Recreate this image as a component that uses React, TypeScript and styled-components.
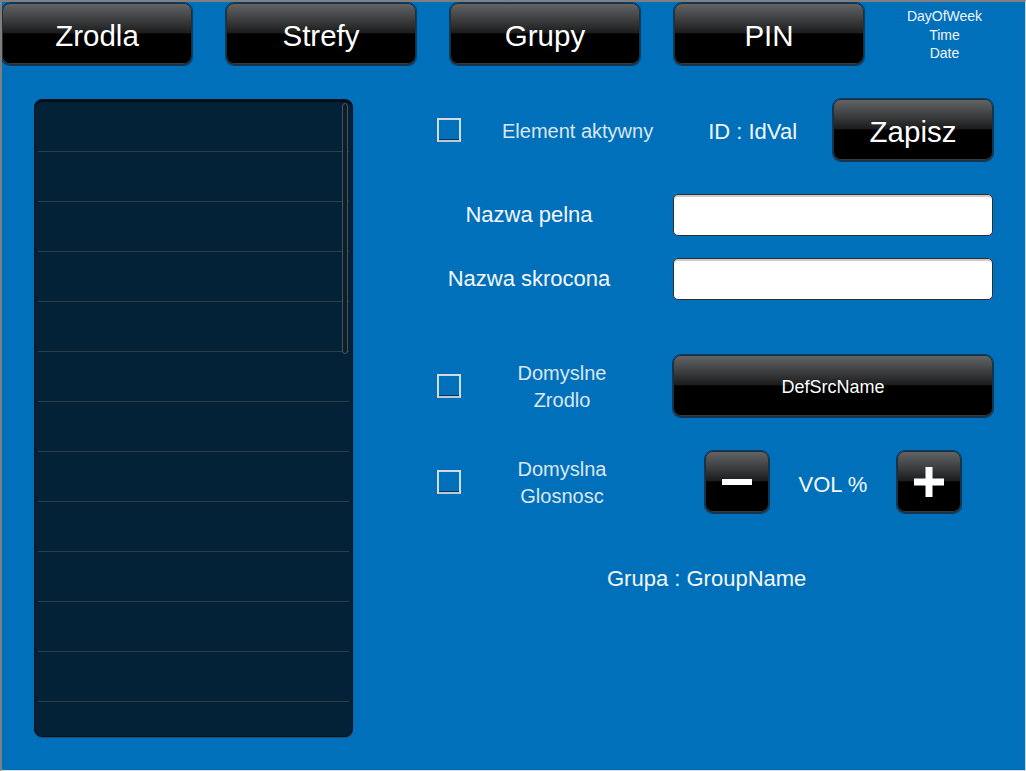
import React from "react";
import styled, { createGlobalStyle } from "styled-components";

const Global = createGlobalStyle`
  html, body { margin: 0; padding: 0; background: #0070bb; }
  body { font-family: "Liberation Sans", Arial, sans-serif; }
  * { box-sizing: border-box; }
`;

const Page = styled.div`
  width: 1026px;
  height: 771px;
  background: #0070bb;
  border-top: 2px solid #7d7f82;
  border-left: 2px solid #7d7f82;
  border-right: 1px solid #c9d6e0;
  border-bottom: 1px solid #d9dde0;
  display: flex;
  flex-direction: column;
  font-family: "Liberation Sans", Arial, sans-serif;
  color: #f4f7fa;
  overflow: hidden;
`;

const Header = styled.div`
  display: flex;
  align-items: flex-start;
  padding-top: 1px;
`;

const NavGroup = styled.div`
  display: flex;
  gap: 34px;
`;

const GlossButton = styled.button<{ $w: number; $h: number; $fs: number; $pt?: number }>`
  width: ${(p) => p.$w}px;
  height: ${(p) => p.$h}px;
  flex: none;
  padding: ${(p) => p.$pt ?? 0}px 0 0 0;
  margin: 0;
  border: 1px solid #2a2d30;
  border-radius: 8px;
  background: linear-gradient(
    to bottom,
    #626364 0%,
    #3a3b3c 28%,
    #1c1c1d 48%,
    #000 50%,
    #000 100%
  );
  box-shadow: 0 0 0 1px rgba(0, 20, 40, 0.55), inset 0 -1px 0 #3a3a3a;
  color: #ffffff;
  font-family: "Liberation Sans", Arial, sans-serif;
  font-size: ${(p) => p.$fs}px;
  line-height: 1;
  display: flex;
  align-items: center;
  justify-content: center;
  cursor: pointer;
`;

const Clock = styled.div`
  flex: 1;
  padding-top: 4px;
  text-align: center;
  font-size: 14px;
  line-height: 18.5px;
  color: #f2f6fa;
`;

const Main = styled.div`
  display: flex;
  align-items: flex-start;
  margin-top: 34px;
  padding-left: 32px;
`;

const ListPanel = styled.div`
  position: relative;
  width: 319px;
  height: 638px;
  flex: none;
  background: #032238;
  border: 1px solid #06121c;
  border-radius: 8px;
  box-shadow: inset 0 2px 1px #010c14, 0 1px 0 #1c4f77;
  padding: 2px 3px 0 3px;
  overflow: hidden;
`;

const ListRow = styled.div`
  height: 50px;
  border-bottom: 1px solid #2f3d48;
`;

const ScrollBar = styled.div`
  position: absolute;
  top: 3px;
  left: 307px;
  width: 6px;
  height: 251px;
  border: 1px solid #4c5256;
  border-radius: 3px;
  background: #0a1f2d;
`;

const Form = styled.div`
  margin-left: 84px;
  width: 556px;
  display: flex;
  flex-direction: column;
`;

const Row = styled.div<{ $mt: number; $h: number }>`
  display: flex;
  align-items: center;
  margin-top: ${(p) => p.$mt}px;
  height: ${(p) => p.$h}px;
`;

const Check = styled.div`
  width: 24px;
  height: 24px;
  flex: none;
  border: 2px solid #d4dbe0;
  border-bottom-color: #c0c8ce;
  box-shadow: inset 0 -1px 0 #0b3350;
`;

const SmallLabel = styled.div<{ $ml?: number; $w?: number }>`
  margin-left: ${(p) => p.$ml ?? 0}px;
  ${(p) => (p.$w ? `width: ${p.$w}px; text-align: center;` : "")}
  padding-top: 2px;
  font-size: 20px;
  line-height: 27px;
  color: #dbe6ef;
  white-space: nowrap;
`;

const Label = styled.div<{ $w?: number; $ml?: number; $pt?: number }>`
  margin-left: ${(p) => p.$ml ?? 0}px;
  ${(p) => (p.$w ? `width: ${p.$w}px; text-align: center;` : "")}
  padding-top: ${(p) => p.$pt ?? 0}px;
  font-size: 22px;
  line-height: 26px;
  color: #f4f7fa;
  white-space: nowrap;
`;

const Field = styled.input`
  margin-left: auto;
  width: 320px;
  height: 42px;
  border: 1px solid #2b3035;
  border-radius: 5px;
  background: #ffffff;
  box-shadow: inset 0 3px 1px -1px #c9c9c9;
  outline: none;
  padding: 0 8px;
  font-family: "Liberation Sans", Arial, sans-serif;
  font-size: 18px;
`;

const Push = styled.div`
  margin-left: auto;
`;

const VolText = styled.div`
  flex: 1;
  padding-top: 6px;
  text-align: center;
  font-size: 22px;
  color: #f4f7fa;
`;

const GroupLine = styled.div`
  margin-top: 53px;
  padding-left: 170px;
  font-size: 22px;
  line-height: 26px;
  color: #f4f7fa;
`;

const Spacer = styled.div<{ $w: number }>`
  width: ${(p) => p.$w}px;
  flex: none;
`;

const MinusIcon = () => (
  <svg width="30" height="30" viewBox="0 0 30 30">
    <rect x="0" y="12" width="30" height="6" fill="#fff" />
  </svg>
);

const PlusIcon = () => (
  <svg width="32" height="32" viewBox="0 0 32 32">
    <rect x="1" y="12.5" width="30" height="7" fill="#fff" />
    <rect x="12.5" y="1" width="7" height="30" fill="#fff" />
  </svg>
);

export default function App() {
  const rows = Array.from({ length: 13 }, (_, i) => i);
  return (
    <>
      <Global />
      <Page>
        <Header>
          <NavGroup>
            {["Zrodla", "Strefy", "Grupy", "PIN"].map((t) => (
              <GlossButton key={t} $w={190} $h={62} $fs={29.5} $pt={4}>
                {t}
              </GlossButton>
            ))}
          </NavGroup>
          <Clock>
            <div>DayOfWeek</div>
            <div>Time</div>
            <div>Date</div>
          </Clock>
        </Header>
        <Main>
          <ListPanel>
            {rows.map((i) => (
              <ListRow key={i} />
            ))}
            <ScrollBar />
          </ListPanel>
          <Form>
            <Row $mt={0} $h={62}>
              <Check />
              <SmallLabel $ml={41}>Element aktywny</SmallLabel>
              <Label $ml={55} $pt={4}>ID : IdVal</Label>
              <Push />
              <GlossButton $w={160} $h={62} $fs={29.5} $pt={4}>
                Zapisz
              </GlossButton>
            </Row>
            <Row $mt={33} $h={42}>
              <Label $w={184}>Nazwa pelna</Label>
              <Field />
            </Row>
            <Row $mt={22} $h={42}>
              <Label $w={184}>Nazwa skrocona</Label>
              <Field />
            </Row>
            <Row $mt={55} $h={62}>
              <Check />
              <SmallLabel $w={202}>
                Domyslne
                <br />
                Zrodlo
              </SmallLabel>
              <Push />
              <GlossButton $w={320} $h={62} $fs={18} $pt={2}>
                DefSrcName
              </GlossButton>
            </Row>
            <Row $mt={34} $h={62}>
              <Check />
              <SmallLabel $w={202}>
                Domyslna
                <br />
                Glosnosc
              </SmallLabel>
              <Spacer $w={42} />
              <GlossButton $w={64} $h={62} $fs={20} aria-label="minus">
                <MinusIcon />
              </GlossButton>
              <VolText>VOL %</VolText>
              <GlossButton $w={64} $h={62} $fs={20} aria-label="plus">
                <PlusIcon />
              </GlossButton>
              <Spacer $w={32} />
            </Row>
            <GroupLine>Grupa : GroupName</GroupLine>
          </Form>
        </Main>
      </Page>
    </>
  );
}
